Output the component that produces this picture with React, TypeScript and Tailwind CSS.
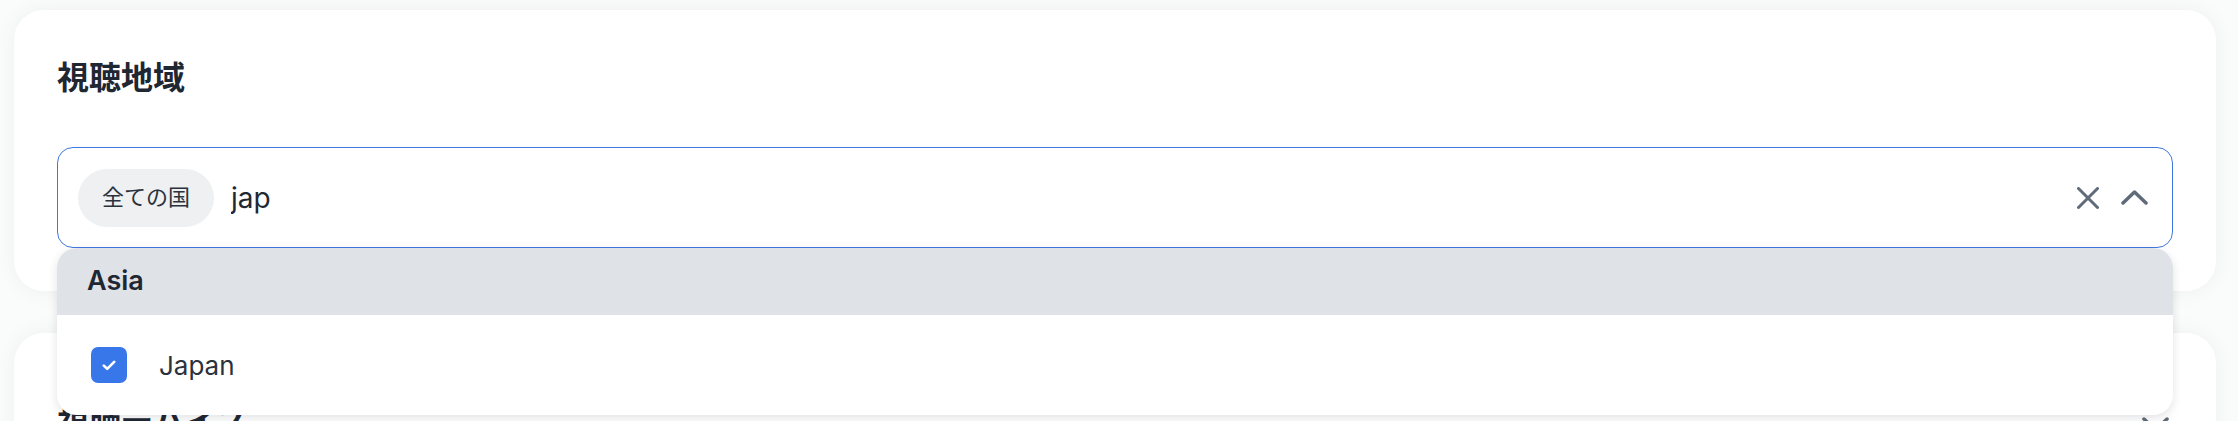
import { useState } from "react";

const font = "font-['Inter','Noto_Sans_CJK_JP',sans-serif]";

function XIcon() {
  return (
    <svg width="22" height="22" viewBox="0 0 22 22" fill="none" className="shrink-0">
      <path d="M1.5 1.5L20.5 20.5M20.5 1.5L1.5 20.5" stroke="#5f6b79" strokeWidth="3" strokeLinecap="round" />
    </svg>
  );
}

function Chevron({ up }: { up?: boolean }) {
  return (
    <svg width="27" height="15" viewBox="0 0 27 15" fill="none" className="shrink-0">
      <path
        d={up ? "M2 13L13.5 2L25 13" : "M2 2L13.5 13L25 2"}
        stroke="#5f6b79"
        strokeWidth="3.5"
        strokeLinecap="round"
        strokeLinejoin="round"
      />
    </svg>
  );
}

export default function App() {
  const [query, setQuery] = useState("jap");
  const [checked, setChecked] = useState(true);

  return (
    <div className={`${font} min-h-screen bg-[#fafbfb] pl-[14px] pr-[22px] pt-[10px] text-[#1f2733]`}>
      <section className="relative z-10 h-[281px] rounded-[30px] bg-white px-[43px] pt-[44px] shadow-[0_0_22px_rgba(15,23,42,0.05)]">
        <h2 className="text-[32px] font-bold leading-[48px]">視聴地域</h2>

        <div className="relative mt-[45px]">
          <div className="flex h-[101px] items-center rounded-[16px] border-[1.5px] border-[#3f78e0] pl-[20px] pr-[24px]">
            <span className="flex h-[58px] items-center rounded-full bg-[#eef0f2] px-[24px] text-[22px] text-[#2b323c]">
              全ての国
            </span>
            <input
              value={query}
              onChange={(e) => setQuery(e.target.value)}
              className="ml-[17px] min-w-0 flex-1 bg-transparent text-[28px] text-[#1f2733] outline-none"
            />
            <XIcon />
            <span className="ml-[22px]">
              <Chevron up />
            </span>
          </div>

          <div className="absolute left-0 right-0 top-full overflow-hidden rounded-[20px] bg-white shadow-[0_3px_10px_rgba(15,23,42,0.12)]">
            <div className="flex h-[67px] items-center bg-[#dfe2e7] pl-[30px] text-[27px] font-semibold">
              Asia
            </div>
            <button
              type="button"
              onClick={() => setChecked(!checked)}
              className="flex h-[100px] w-full items-center pl-[34px] text-left"
            >
              <span
                className={`flex h-[36px] w-[36px] items-center justify-center rounded-[7px] ${
                  checked ? "bg-[#3877ea]" : "border-2 border-gray-300 bg-white"
                }`}
              >
                {checked && (
                  <svg width="14" height="11" viewBox="0 0 14 11" fill="none">
                    <path d="M1.8 5.6L5.2 8.8L12.2 1.8" stroke="white" strokeWidth="2.6" strokeLinecap="round" strokeLinejoin="round" />
                  </svg>
                )}
              </span>
              <span className="ml-[32px] text-[26px] text-[#2b323c]">Japan</span>
            </button>
          </div>
        </div>
      </section>

      <section className="mt-[42px] flex h-[200px] items-start justify-between rounded-[30px] bg-white pl-[43px] pr-[47px] pt-[66px] shadow-[0_0_22px_rgba(15,23,42,0.05)]">
        <h2 className="text-[32px] font-bold leading-[48px]">視聴デバイス</h2>
        <span className="mt-[18px]">
          <Chevron />
        </span>
      </section>
    </div>
  );
}
